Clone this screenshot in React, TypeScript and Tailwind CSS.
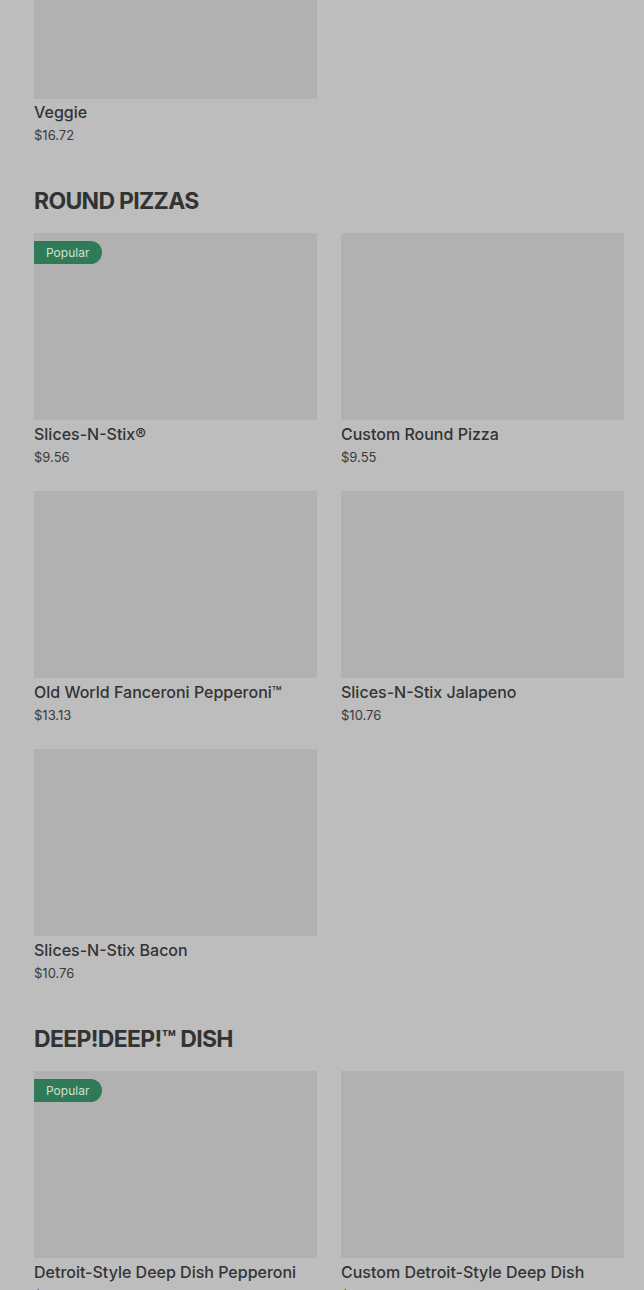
import React from "react";

type Item = { name: string; price: string; popular?: boolean };

function Card({ item }: { item: Item }) {
  return (
    <div className="flex flex-col">
      <div className="relative h-[187px] bg-[#b1b1b1]">
        {item.popular && (
          <div className="absolute left-0 top-[8px] flex h-[23px] items-center rounded-r-full bg-[#2f7b58] pl-[12px] pr-[13px] text-[12px] text-[#cfe0d6]">
            Popular
          </div>
        )}
      </div>
      <div className="mt-[3px] text-[16px] leading-[22px] font-medium text-[#333333]">{item.name}</div>
      <div className="mt-[3px] text-[13px] leading-[18px] text-[#3a3a3a]">{item.price}</div>
    </div>
  );
}

function Section({ title, items }: { title: string; items: Item[] }) {
  return (
    <div className="mt-[40px]">
      <h2 className="translate-y-[1px] text-[23px] leading-[32px] font-bold tracking-[-0.7px] text-[#333333]">{title}</h2>
      <div className="mt-[17px] grid grid-cols-2 gap-x-[24px] gap-y-[25px]">
        {items.map((it, i) => (
          <Card key={i} item={it} />
        ))}
      </div>
    </div>
  );
}

export default function App() {
  return (
    <div
      className="h-[1290px] overflow-hidden bg-[#bdbdbd] pl-[34px] pr-[20px]"
      style={{ fontFamily: "Inter, 'Noto Sans', sans-serif" }}
    >
      <div className="grid grid-cols-2 gap-x-[24px]">
        <div className="flex flex-col">
          <div className="h-[99px] bg-[#b1b1b1]" />
          <div className="mt-[2px] text-[16px] leading-[22px] font-medium text-[#333333]">Veggie</div>
          <div className="mt-[3px] text-[13px] leading-[18px] text-[#3a3a3a]">$16.72</div>
        </div>
      </div>
      <Section
        title="ROUND PIZZAS"
        items={[
          { name: "Slices-N-Stix®", price: "$9.56", popular: true },
          { name: "Custom Round Pizza", price: "$9.55" },
          { name: "Old World Fanceroni Pepperoni™", price: "$13.13" },
          { name: "Slices-N-Stix Jalapeno", price: "$10.76" },
          { name: "Slices-N-Stix Bacon", price: "$10.76" },
        ]}
      />
      <Section
        title="DEEP!DEEP!™ DISH"
        items={[
          { name: "Detroit-Style Deep Dish Pepperoni", price: "$11.11", popular: true },
          { name: "Custom Detroit-Style Deep Dish", price: "$11.11" },
        ]}
      />
    </div>
  );
}
